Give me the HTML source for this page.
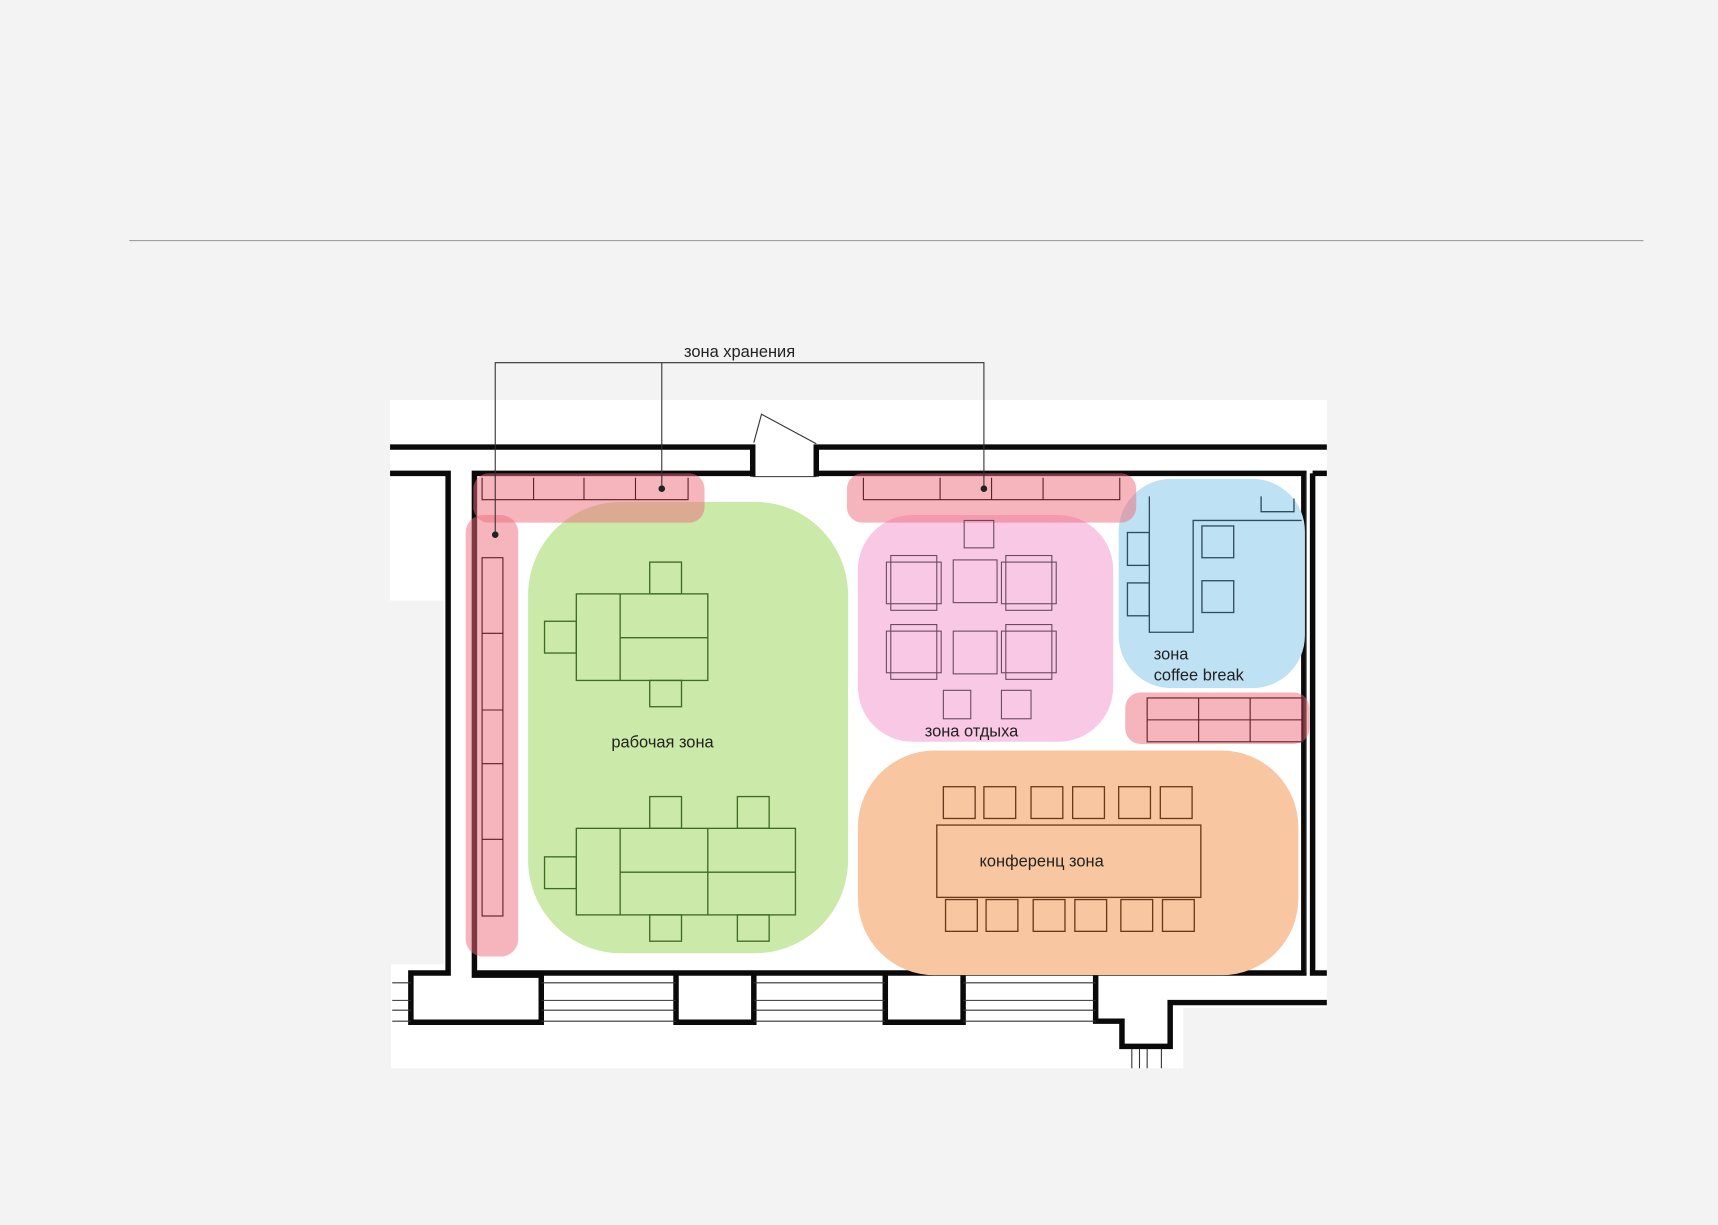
<!DOCTYPE html>
<html><head><meta charset="utf-8"><style>
html,body{margin:0;padding:0;background:#f3f3f3;}
svg{display:block;}
text{font-family:"Liberation Sans","DejaVu Sans",sans-serif;fill:#222;}
</style></head><body>
<svg width="1718" height="1225" viewBox="0 0 1568 1118" xmlns="http://www.w3.org/2000/svg">
<rect width="1568" height="1118" fill="#f3f3f3"/>
<line x1="118" y1="219.5" x2="1500" y2="219.5" stroke="#a0a0a0" stroke-width="1"/>
<!-- white plan -->
<path d="M356 365 H1211 V920 H1080 V975 H357 V880 H405 V548 H356 Z" fill="#fff"/>
<!-- walls -->
<g stroke="#0a0a0a" stroke-width="5" fill="none">
<path d="M356 408 H687 V435"/>
<path d="M745 435 V408 H1211"/>
<path d="M356 432 H409 V888 H375 V933 H494 V890 H433 V432 H687"/>
<path d="M745 432 H1190 V888 H433"/>
<path d="M1198 432 H1211"/>
<path d="M1198 432 V888 H1211"/>
<path d="M617 890 V933 H688 V890"/>
<path d="M808 890 V933 H879 V890"/>
<path d="M1000 890 V932 H1024 V955 H1068 V915 H1211"/>
</g>
<g stroke="#333" stroke-width="1" fill="none">
<path d="M687 435 H745"/>
<path d="M688 404 L695 378 L745 405"/>
<path d="M358 897 H375 M494 897 H617 M688 897 H808 M879 897 H1000"/>
<path d="M358 913 H375 M494 913 H617 M688 913 H808 M879 913 H1000"/>
<path d="M358 922 H375 M494 922 H617 M688 922 H808 M879 922 H1000"/>
<path d="M358 932 H375 M494 932 H617 M688 932 H808 M879 932 H1000"/>
<path d="M1033 957 V975 M1040 957 V975 M1047 957 V975 M1060 957 V975"/>
<path d="M1192 432 V888"/>
</g>
<!-- zones -->
<rect x="482" y="458" width="292" height="412" rx="85" fill="#cbe9a8"/>
<rect x="783" y="470" width="233" height="207" rx="50" fill="#f9c8e5"/>
<rect x="1021" y="437" width="170" height="191" rx="48" fill="#bee1f3"/>
<rect x="783" y="685" width="402" height="205" rx="70" fill="#f8c6a0"/>
<g fill="#ee6b7c" fill-opacity="0.5">
<rect x="432" y="432" width="211" height="45" rx="14"/>
<rect x="425" y="470" width="48" height="403" rx="16"/>
<rect x="773" y="432" width="264" height="45" rx="14"/>
<rect x="1027" y="632" width="168" height="47" rx="14"/>
</g>
<!-- storage furniture -->
<g stroke="#5a1e22" stroke-width="1" fill="none">
<path d="M440 436 V456 H628 V436 M487 436 V456 M533 436 V456 M580 436 V456"/>
<path d="M788 436 V456 H1022 V436 M858 436 V456 M905 436 V456 M952 436 V456"/>
<rect x="440" y="509" width="19" height="327"/>
<path d="M440 578 H459 M440 648 H459 M440 697 H459 M440 766 H459"/>
<rect x="1047" y="637" width="142" height="40"/><path d="M1047 657 H1189 M1094 637 V677 M1141 637 V677"/>
</g>
<!-- leader lines -->
<g stroke="#333" stroke-width="1" fill="none">
<path d="M452 488 V331 H898 V446 M604 331 V446"/>
</g>
<circle cx="452" cy="488" r="3" fill="#222"/><circle cx="604" cy="446" r="3" fill="#222"/><circle cx="898" cy="446" r="3" fill="#222"/>
<text x="675" y="326" font-size="15" text-anchor="middle">зона хранения</text>
<!-- work desks -->
<g stroke="#3f6a22" stroke-width="1.2" fill="none">
<rect x="526" y="542" width="120" height="79"/><path d="M566 542 V621 M566 582 H646"/>
<rect x="593" y="513" width="29" height="29"/><rect x="593" y="621" width="29" height="24"/><rect x="497" y="567" width="29" height="29"/>
<rect x="526" y="756" width="200" height="79"/><path d="M566 756 V835 M646 756 V835 M566 796 H726"/>
<rect x="593" y="727" width="29" height="29"/><rect x="673" y="727" width="29" height="29"/>
<rect x="593" y="835" width="29" height="24"/><rect x="673" y="835" width="29" height="24"/>
<rect x="497" y="782" width="29" height="29"/>
</g>
<!-- lounge -->
<g stroke="#6a4a60" stroke-width="1" fill="none">
<rect x="880" y="475" width="27" height="25"/>
<rect x="813" y="507" width="42" height="50"/><rect x="809" y="513" width="50" height="38"/>
<rect x="870" y="511" width="40" height="39"/>
<rect x="918" y="507" width="42" height="50"/><rect x="914" y="513" width="50" height="38"/>
<rect x="813" y="570" width="42" height="50"/><rect x="809" y="576" width="50" height="38"/>
<rect x="870" y="576" width="40" height="39"/>
<rect x="918" y="570" width="42" height="50"/><rect x="914" y="576" width="50" height="38"/>
<rect x="861" y="630" width="25" height="26"/><rect x="914" y="630" width="27" height="26"/>
</g>
<!-- coffee -->
<g stroke="#2d4c5e" stroke-width="1.2" fill="none">
<path d="M1188 475 H1089 V577 H1049 V453"/><path d="M1151 453 V467 H1181 V455"/>
<rect x="1097" y="480" width="29" height="29"/><rect x="1097" y="530" width="29" height="29"/>
<rect x="1029" y="486" width="20" height="30"/><rect x="1029" y="532" width="20" height="30"/>
</g>
<!-- conference -->
<g stroke="#6a3a18" stroke-width="1.2" fill="none">
<rect x="855" y="753" width="241" height="66"/>
<rect x="861" y="718" width="29" height="29"/><rect x="898" y="718" width="29" height="29"/><rect x="941" y="718" width="29" height="29"/><rect x="979" y="718" width="29" height="29"/><rect x="1021" y="718" width="29" height="29"/><rect x="1059" y="718" width="29" height="29"/>
<rect x="863" y="821" width="29" height="29"/><rect x="900" y="821" width="29" height="29"/><rect x="943" y="821" width="29" height="29"/><rect x="981" y="821" width="29" height="29"/><rect x="1023" y="821" width="29" height="29"/><rect x="1061" y="821" width="29" height="29"/>
</g>
<text x="558" y="682" font-size="15">рабочая зона</text>
<text x="844" y="672" font-size="15">зона отдыха</text>
<text x="1053" y="602" font-size="15">зона</text>
<text x="1053" y="621" font-size="15">coffee break</text>
<text x="894" y="791" font-size="15">конференц зона</text>
</svg>
</body></html>
